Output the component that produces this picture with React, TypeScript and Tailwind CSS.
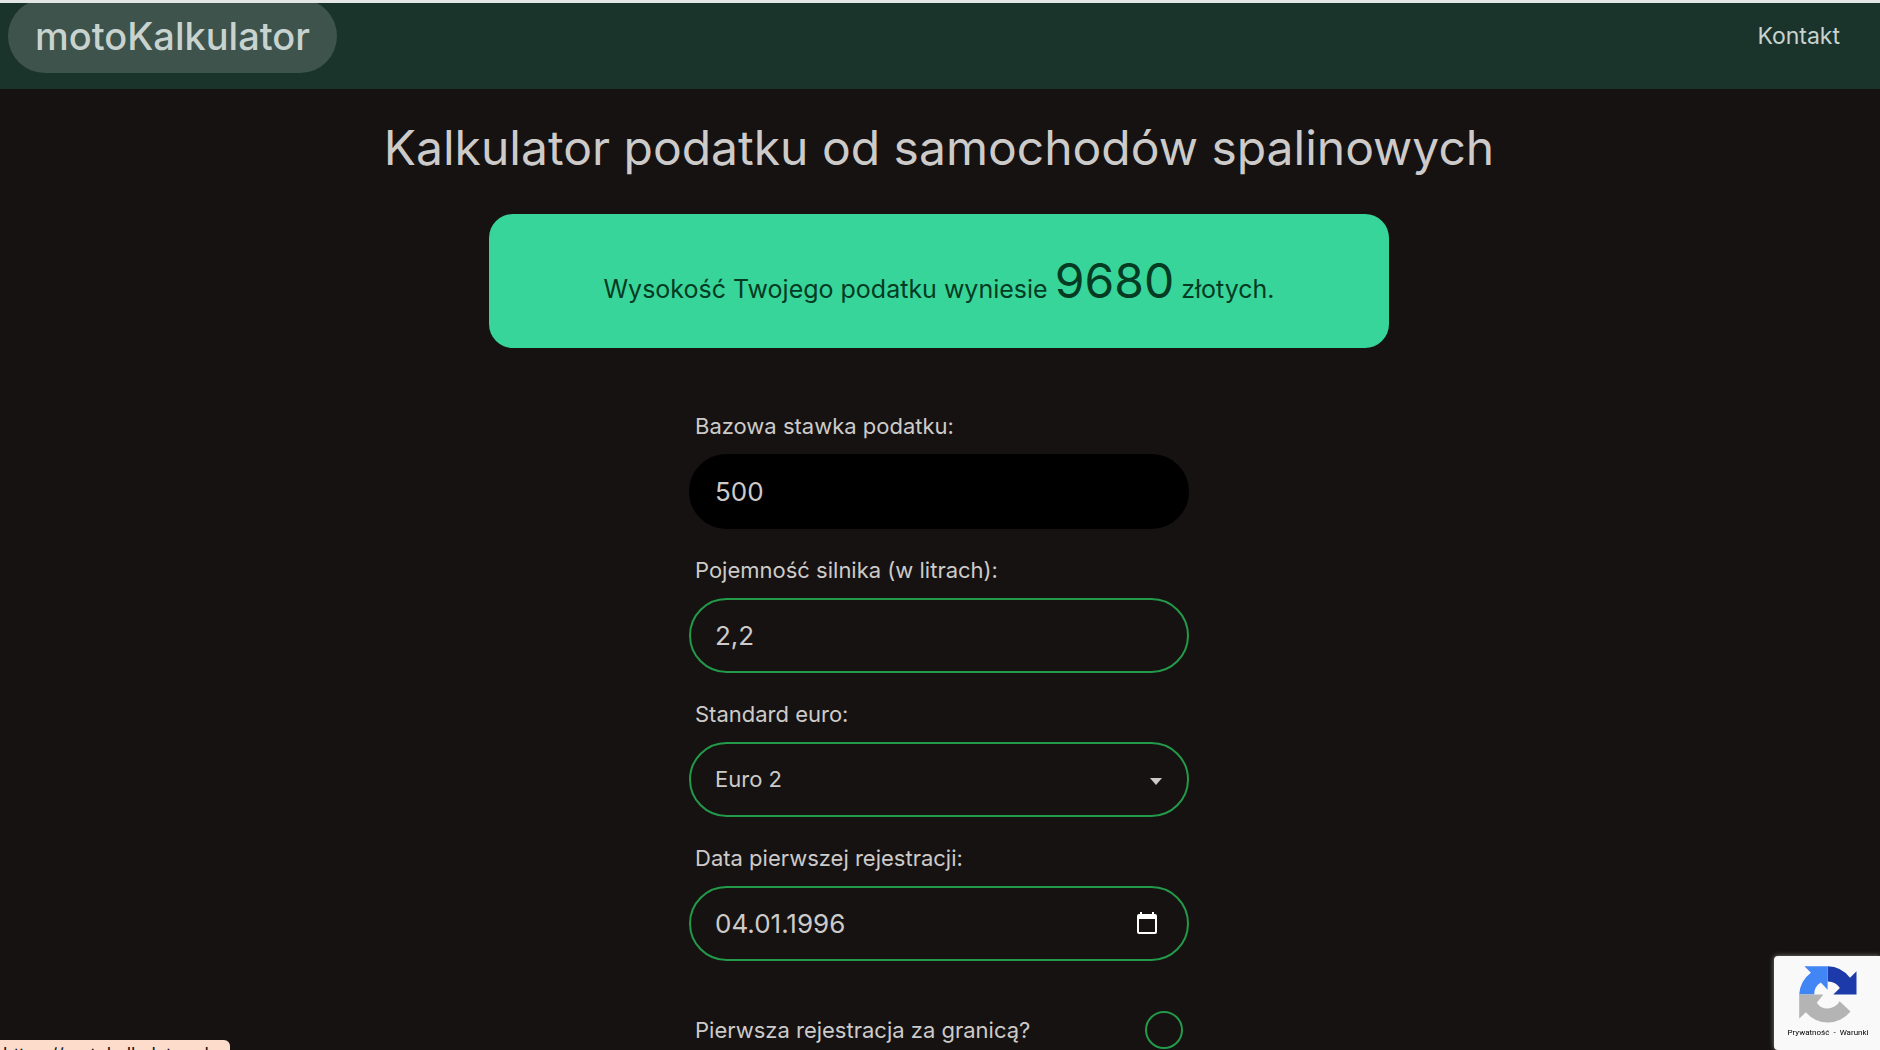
import React, { useState } from "react";

const fieldClass =
  "h-[75px] w-full appearance-none rounded-full border-2 border-[#23994a] bg-transparent px-6 text-[#cdcbca] outline-none";

function Field({ id, label, children }: { id: string; label: string; children: React.ReactNode }) {
  return (
    <div className="flex flex-col gap-[14px]">
      <label htmlFor={id} className="px-[6px] text-[22px] leading-7">
        {label}
      </label>
      {children}
    </div>
  );
}

function CalendarIcon() {
  return (
    <svg viewBox="0 0 20 22" className="h-[22px] w-5" aria-hidden="true">
      <path
        fill="#fff"
        fillRule="evenodd"
        d="M3 0h2v2h10V0h2v2h1a2 2 0 0 1 2 2v16a2 2 0 0 1-2 2H2a2 2 0 0 1-2-2V4a2 2 0 0 1 2-2h1zM2 7v13h16V7z"
      />
    </svg>
  );
}

function RecaptchaLogo() {
  return (
    <svg viewBox="0 0 60 60" className="size-[60px]" aria-hidden="true">
      <path
        fill="#1c3aa9"
        d="M58.5 29.6V6.2l-6.5 6.5A29 29 0 0 0 29.6 1.2v15.3a14 14 0 0 1 12.3 6.6l-6.6 6.5z"
      />
      <path
        fill="#4285f4"
        d="M29.6 1.2H6.4l6.5 6.5A29 29 0 0 0 1.2 29.6h15a14 14 0 0 1 6.6-12l6.8 7.2z"
      />
      <path
        fill="#b4b4b4"
        d="M1.2 29.6v24.2l6.6-6.5a29 29 0 0 0 44.7-.8L41.6 36.3a14 14 0 0 1-18.6 5.6 14 14 0 0 1-4.2-4.2l6.5-8.1z"
      />
    </svg>
  );
}

export default function App() {
  const [base, setBase] = useState("500");
  const [engine, setEngine] = useState("2,2");
  const [date, setDate] = useState("04.01.1996");

  return (
    <div className="h-screen overflow-hidden bg-[#161211] font-['Inter',sans-serif] text-[#cdcbca]">
      <header className="flex h-[89px] items-start justify-between overflow-hidden border-t-[3px] border-[#e4e6e5] bg-[#1a342b] pr-10 pl-2">
        <a
          href="#"
          className="-mt-1 flex h-[74px] items-center rounded-full bg-[#3e534b] px-[27px] text-[38px] font-medium text-[#c8d3cf]"
        >
          motoKalkulator
        </a>
        <a href="#kontakt" className="flex h-[66px] items-center text-[23px] text-[#c8d3cf]">
          Kontakt
        </a>
      </header>

      <main className="flex flex-col items-center pr-0.5">
        <h1 className="mt-[27px] text-[48px] leading-16">Kalkulator podatku od samochodów spalinowych</h1>

        <p className="mt-[34px] flex h-[134px] w-full max-w-[900px] items-baseline justify-center gap-[7px] rounded-3xl bg-[#38d59b] pt-[37px] text-[25px] text-[#053b22]">
          <span>Wysokość Twojego podatku wyniesie</span>
          <span className="text-[48px] leading-[60px]">9680</span>
          <span>złotych.</span>
        </p>

        <form className="mt-16 flex w-full max-w-[500px] flex-col gap-[27px]">
          <Field id="base" label="Bazowa stawka podatku:">
            <input
              id="base"
              value={base}
              onChange={(e) => setBase(e.target.value)}
              className="h-[75px] w-full rounded-full border-2 border-black bg-black px-6 text-[26px] outline-none"
            />
          </Field>
          <Field id="engine" label="Pojemność silnika (w litrach):">
            <input
              id="engine"
              value={engine}
              onChange={(e) => setEngine(e.target.value)}
              className={fieldClass + " text-[26px]"}
            />
          </Field>
          <Field id="euro" label="Standard euro:">
            <div className="relative">
              <select id="euro" defaultValue="2" className={fieldClass + " text-[22px]"}>
                <option value="1">Euro 1</option>
                <option value="2">Euro 2</option>
                <option value="3">Euro 3</option>
              </select>
              <svg
                viewBox="0 0 12 7"
                className="pointer-events-none absolute top-[36px] right-[27px] h-[7px] w-3"
                aria-hidden="true"
              >
                <path fill="#cdcbca" d="M0 0h12L6 7z" />
              </svg>
            </div>
          </Field>
          <Field id="date" label="Data pierwszej rejestracji:">
            <div className="relative">
              <input
                id="date"
                value={date}
                onChange={(e) => setDate(e.target.value)}
                className={fieldClass + " text-[26px]"}
              />
              <button type="button" aria-label="Kalendarz" className="absolute top-[26px] right-8">
                <CalendarIcon />
              </button>
            </div>
          </Field>
          <div className="mt-[23px] flex items-center justify-between px-[6px]">
            <label htmlFor="abroad" className="text-[22px] leading-7">
              Pierwsza rejestracja za granicą?
            </label>
            <input
              id="abroad"
              type="checkbox"
              className="size-[38px] appearance-none rounded-full border-2 border-[#23994a] checked:bg-[#23994a]"
            />
          </div>
        </form>
      </main>

      <aside className="fixed right-0 bottom-0 flex h-[94px] w-[106px] flex-col items-center rounded-l-sm bg-[#f9f9f9] pt-[9px] pl-0.5 shadow-[0_0_5px_gray]">
        <RecaptchaLogo />
        <p className="flex gap-1 font-['Roboto',sans-serif] text-[8px] leading-4 text-black">
          <a href="#prywatnosc">Prywatność</a>
          <span>-</span>
          <a href="#warunki">Warunki</a>
        </p>
      </aside>

      <div className="fixed bottom-0 left-0 h-[10px] w-[230px] overflow-hidden rounded-tr-md bg-[#fddccb] pt-[3px] pl-[3px] text-[18px] leading-6 text-[#161211]">
        https://motokalkulator.pl
      </div>
    </div>
  );
}
